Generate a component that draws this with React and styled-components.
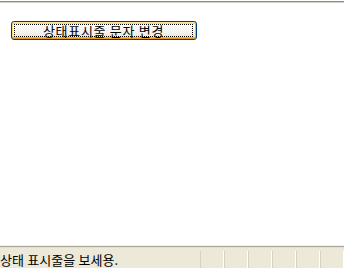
import React from "react";
import styled, { createGlobalStyle } from "styled-components";

const GlobalStyle = createGlobalStyle`
  html, body {
    margin: 0;
    padding: 0;
    background: #ffffff;
  }
  #root {
    width: 344px;
    height: 268px;
  }
`;

const Window = styled.div`
  width: 344px;
  height: 268px;
  display: flex;
  flex-direction: column;
  background: #ffffff;
  font-family: "Noto Sans CJK KR", "Liberation Sans", sans-serif;
  overflow: hidden;
`;

const TopEdge = styled.div`
  height: 1px;
  margin-top: 1px;
  background: #8c8c80;
  border-bottom: 1px solid #d4d0c8;
`;

const Client = styled.div`
  flex: 1;
  padding: 18px 0 0 11px;
`;

const XpButton = styled.button`
  width: 186px;
  height: 19px;
  padding: 0;
  border: 1px solid #003c74;
  border-radius: 3px;
  background: linear-gradient(#ffffff 0%, #f4f3ee 60%, #e6e3d6 100%);
  box-shadow: inset 0 1px 0 #ffe7a2, inset 0 -1px 0 #e5971f, inset 1px 0 0 #fbd87c,
    inset -1px 0 0 #f3b540, inset 0 2px 0 #fcd884, inset 0 -2px 0 #f8b330;
  display: flex;
  align-items: stretch;
  cursor: default;
`;

const FocusRing = styled.span`
  flex: 1;
  margin: 2px 3px 2px 2px;
  border: 1px dotted #000000;
  display: flex;
  align-items: center;
  justify-content: center;
  font-family: "Noto Sans CJK KR", sans-serif;
  font-size: 13px;
  line-height: 12px;
  color: #000000;
  letter-spacing: 0.7px;
`;

const StatusBar = styled.div`
  height: 22px;
  background: #ece9d8;
  border-top: 1px solid #f4f2e8;
  box-shadow: inset 0 1px 0 #aca899, inset 0 2px 0 #e2ded0;
  display: flex;
  align-items: stretch;
`;

const StatusText = styled.div`
  flex: 1;
  font-size: 13px;
  line-height: 20px;
  padding-top: 4px;
  color: #000000;
  white-space: nowrap;
  letter-spacing: 0.1px;
`;

const Panel = styled.div`
  width: 22px;
  margin-top: 5px;
  border-left: 1px solid #d6d2c2;
  border-right: 1px solid #ffffff;
`;

export default function App() {
  const panels = [0, 1, 2, 3, 4, 5];
  return (
    <>
      <GlobalStyle />
      <Window>
        <TopEdge />
        <Client>
          <XpButton>
            <FocusRing>상태표시줄 문자 변경</FocusRing>
          </XpButton>
        </Client>
        <StatusBar>
          <StatusText>상태 표시줄을 보세용.</StatusText>
          {panels.map((p) => (
            <Panel key={p} />
          ))}
        </StatusBar>
      </Window>
    </>
  );
}
